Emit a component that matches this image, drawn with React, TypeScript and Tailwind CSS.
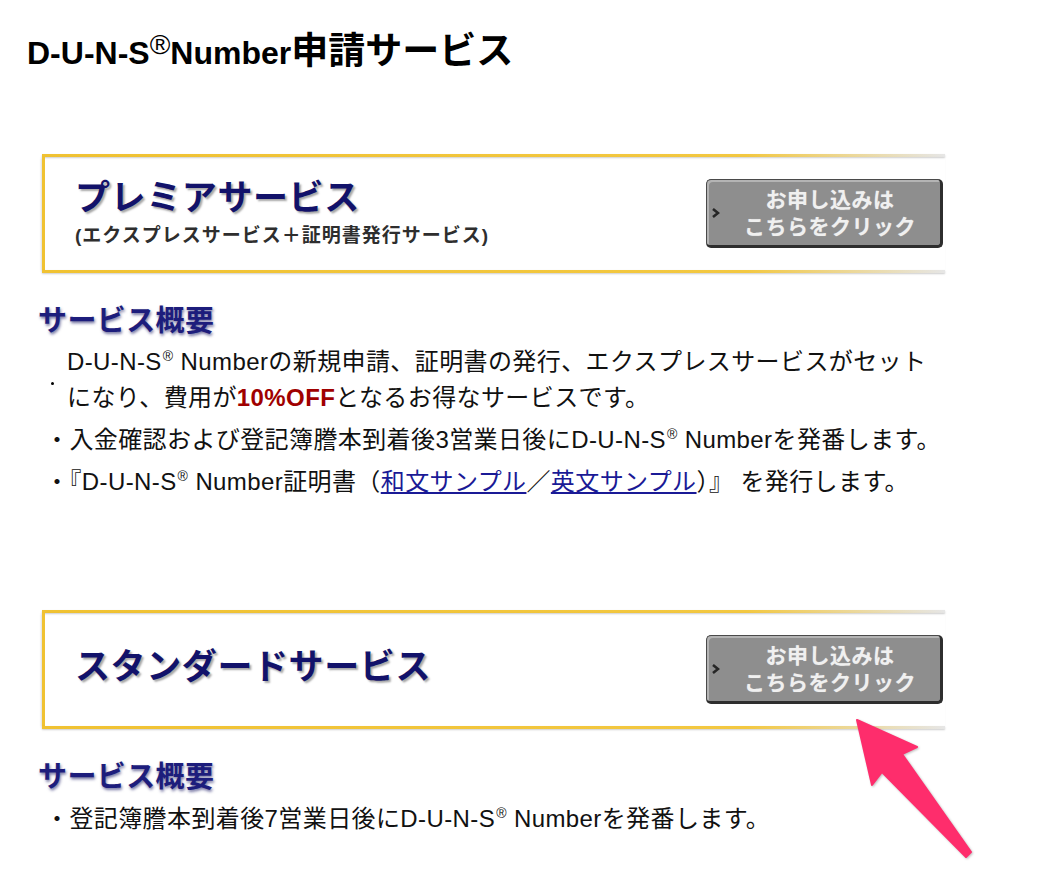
const font = "font-['Liberation_Sans','Noto_Sans_CJK_JP',sans-serif]";

const ApplyButton = () => (
  <div className="mr-[2px] flex h-[69px] w-[237px] items-center rounded-[5px] border border-r-[3px] border-b-[3px] border-[#4a4a4a] border-r-[#2e2e2e] border-b-[#2e2e2e] bg-[#8e8e8e] shadow-[inset_2px_2px_0_#b4b4b4]">
    <svg className="ml-[4px] h-[12px] w-[9px]" viewBox="0 0 9 12">
      <path d="M2 2 L7 6 L2 10" fill="none" stroke="#262626" strokeWidth="2.6" />
    </svg>
    <div className="flex-1 text-center text-[21px] leading-[27px] font-bold tracking-[0.5px] text-[#f0f0f0] [text-shadow:0_0_1px_rgba(255,255,255,0.4)]">
      お申し込みは
      <br />
      こちらをクリック
    </div>
  </div>
);

const Banner = ({ title, sub }: { title: string; sub?: string }) => (
  <div className="ml-[42px] flex w-[903px] flex-col">
    <div className="h-[3px] bg-[linear-gradient(to_right,#f0c232_0%,#f3c841_78%,#e6e6e6_100%)] shadow-[0_1px_2px_rgba(0,0,0,0.2)]" />
    <div className="flex h-[113px] items-center border-l-[3px] border-[#f0c232] shadow-[-1px_1px_2px_rgba(0,0,0,0.15)]">
      <div className={`flex-1 pl-[30px] ${sub ? 'pb-[2px]' : 'pb-[6px]'}`}>
        <div className="text-[35px] leading-[42px] font-bold tracking-[0.6px] text-[#12126a] [text-shadow:2px_2px_2px_rgba(0,0,0,0.35)]">
          {title}
        </div>
        {sub && (
          <div className="mt-[4px] text-[19px] leading-[26px] font-bold tracking-[1px] text-[#2e2e2e]">{sub}</div>
        )}
      </div>
      <ApplyButton />
    </div>
    <div className="h-[3px] bg-[linear-gradient(to_right,#f0c232_0%,#f3c841_78%,#e6e6e6_100%)] shadow-[0_1px_2px_rgba(0,0,0,0.2)]" />
  </div>
);

const Heading = () => (
  <div className="ml-[38px] mt-[30px] h-[36px] text-[29px] leading-[36px] font-bold tracking-[0.4px] text-[#1d1d7c] [text-shadow:1px_2px_3px_rgba(10,10,90,0.55)]">
    サービス概要
  </div>
);

const Reg = () => <span className="relative -top-[9px] ml-[1px] text-[14px]">®</span>;

const App = () => {
  return (
    <div className={`relative h-[874px] w-[1056px] overflow-hidden bg-white text-black ${font}`}>
      {/* page title */}
      <h1 className="ml-[27px] mt-[30px] h-[44px] text-[32px] leading-[44px] font-bold">
        D-U-N-S
        <span className="relative -top-[10px] text-[28px] font-normal">®</span>
        Number<span className="text-[37px]">申請サービス</span>
      </h1>

      {/* premium */}
      <div className="mt-[80px]">
        <Banner title="プレミアサービス" sub="(エクスプレスサービス＋証明書発行サービス)" />
      </div>
      <Heading />
      <ul className="ml-[45px] mt-[5px] flex flex-col gap-[6px] text-[24px] leading-[36px] tracking-[0.4px] text-[#111]">
        <li className="flex h-[72px] items-center">
          <span className="flex w-[22px] pl-[6px] pt-[6px]">
            <span className="h-[3px] w-[3px] rounded-full bg-black" />
          </span>
          <span className="flex flex-col">
            <span className="h-[36px] whitespace-nowrap">
              D-U-N-S<Reg /> Numberの新規申請、証明書の発行、エクスプレスサービスがセット
            </span>
            <span className="h-[36px] whitespace-nowrap">
              になり、費用が<span className="font-bold text-[#a00000]">10%OFF</span>となるお得なサービスです。
            </span>
          </span>
        </li>
        <li className="h-[36px] whitespace-nowrap">
          ・入金確認および登記簿謄本到着後3営業日後にD-U-N-S<Reg /> Numberを発番します。
        </li>
        <li className="h-[36px] whitespace-nowrap">
          ・『D-U-N-S<Reg /> Number証明書（<a href="#" className="text-[#1a1a96] underline">和文サンプル</a>／
          <a href="#" className="text-[#1a1a96] underline">英文サンプル</a>）』 を発行します。
        </li>
      </ul>

      {/* standard */}
      <div className="mt-[110px]">
        <Banner title="スタンダードサービス" />
      </div>
      <Heading />
      <ul className="ml-[45px] mt-[6px] text-[24px] leading-[36px] tracking-[0.4px] text-[#111]">
        <li className="h-[36px] whitespace-nowrap">・登記簿謄本到着後7営業日後にD-U-N-S<Reg /> Numberを発番します。</li>
      </ul>

      {/* annotation arrow */}
      <svg className="pointer-events-none absolute left-0 top-0 h-[874px] w-[1056px]" viewBox="0 0 1056 874">
        <polygon
          points="857,720 917,747 902,754 971,852 966,857 882,772 872,785"
          fill="#fe2d6c"
          stroke="#fe2d6c"
          strokeWidth="2"
          strokeLinejoin="round"
          className="drop-shadow-[1px_1px_1px_rgba(0,0,0,0.25)]"
        />
      </svg>
    </div>
  );
};

export default App;
